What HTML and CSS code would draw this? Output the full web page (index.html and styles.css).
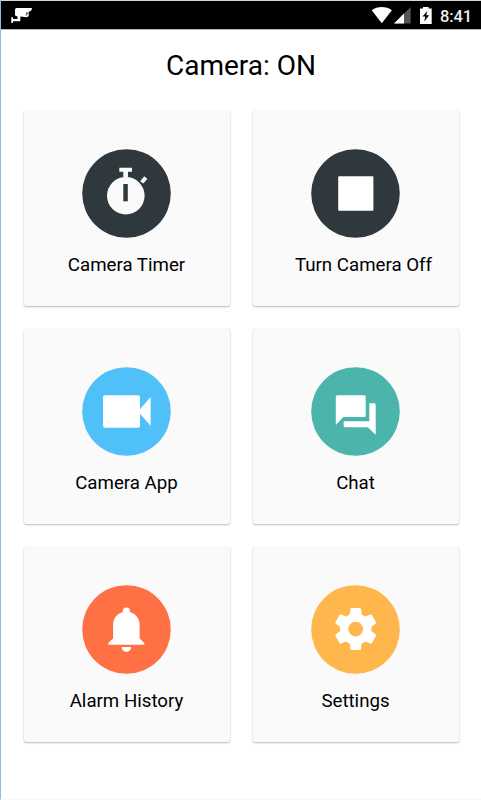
FILE: index.html
```html
<!DOCTYPE html>
<html lang="en">
<head>
<meta charset="utf-8">
<title>Camera</title>
<link rel="stylesheet" href="styles.css">
</head>
<body>
<div class="screen">
  <header class="status">
    <svg class="cctv" width="22" height="16" viewBox="0 0 22 16" fill="#fff">
      <path d="M4 1.2 5 0H21L20.5 2.3 17.7 4V8L16 9.3 9.3 8.5V13.2H2V15H.3V9.3H2V11H6.5V8.6L4 7.5Z"/>
      <path d="M15 4.2h2.5v2H16v1.4h-1.5Z" fill="#777"/>
    </svg>
    <svg class="wifi" width="22" height="17" viewBox="0 0 22 17" fill="#fff"><path d="M.7 3.3C6.5-1 15-1 20.9 3.3L10.8 16.3Z"/></svg>
    <svg class="signal" width="17" height="17" viewBox="0 0 17 17"><path d="M0 16.5 16.7 0V16.5Z" fill="#555"/><path d="M0 16.5 10 6.6V16.5Z" fill="#fff"/></svg>
    <svg class="battery" width="12" height="17" viewBox="0 0 12 17"><path d="M3 0H8.6V1.6H11.7V17H0V1.6H3Z" fill="#fff"/><path d="M7.3 4 2.5 9.6H5.3L4.2 14.5 9.2 8.3H6.3Z" fill="#000"/></svg>
    <span class="time">8:41</span>
  </header>
  <h1 class="title">Camera: ON</h1>
  <main class="grid">
    <div class="card">
      <svg class="icon" viewBox="0 0 89 89" fill="#fafafa">
        <circle class="dark" cx="44.5" cy="44.5" r="44.3"/>
        <circle cx="43.8" cy="46.7" r="18.8"/>
        <path d="M37.3 18.7H50V22.7H46V28H41.3V22.7H37.3Z"/>
        <path d="M58.2 32.2 62.2 27.2 65.4 30 61.2 34.6Z"/>
        <path class="dark" d="M41.3 35H45.8V52.3H41.3Z"/>
      </svg>
      <span class="label">Camera Timer</span>
    </div>
    <div class="card">
      <svg class="icon" viewBox="0 0 89 89" fill="#fff">
        <circle class="dark" cx="44.5" cy="44.5" r="44.3"/>
        <rect x="27.2" y="27.2" width="35.2" height="34.6" rx="1"/>
      </svg>
      <span class="label label-off">Turn Camera Off</span>
    </div>
    <div class="card">
      <svg class="icon" viewBox="0 0 89 89" fill="#fff">
        <circle class="blue" cx="44.5" cy="44.5" r="44.3"/>
        <rect x="21" y="28.2" width="37" height="32.5" rx="2"/>
        <path d="M56 44.4 68.6 30V58.8Z"/>
      </svg>
      <span class="label">Camera App</span>
    </div>
    <div class="card">
      <svg class="icon" viewBox="0 0 89 89" fill="#fff">
        <circle class="teal" cx="44.5" cy="44.5" r="44.3"/>
        <path d="M26.3 28.2H53.2a1.5 1.5 0 0 1 1.5 1.5V48.6a1.5 1.5 0 0 1-1.5 1.5H32.4L24.8 58V29.7a1.5 1.5 0 0 1 1.5-1.5Z"/>
        <path d="M58.3 36.2H63.2a1.5 1.5 0 0 1 1.5 1.5V67.7L56.8 60.2H34.2a1.5 1.5 0 0 1-1.5-1.5V54.2H58.3Z"/>
      </svg>
      <span class="label">Chat</span>
    </div>
    <div class="card">
      <svg class="icon" viewBox="0 0 89 89" fill="#fff">
        <circle class="orange" cx="44.5" cy="44.5" r="44.3"/>
        <path d="M40.8 27V26a3.6 3.6 0 0 1 7.2 0V27C54.5 29 57.6 34 57.6 40V53.5L62.3 58V59.8H26.3V58L31.1 53.5V40C31.1 34 34.3 29 40.8 27Z"/>
        <path d="M39.7 62H49.1C49.1 68.3 39.7 68.3 39.7 62Z"/>
      </svg>
      <span class="label">Alarm History</span>
    </div>
    <div class="card">
      <svg class="icon" viewBox="0 0 89 89" fill="#fff">
        <circle class="amber" cx="44.5" cy="44.5" r="44.3"/>
        <path transform="translate(19.5 18.8) scale(2.1)" d="M19.43 12.98c.04-.32.07-.64.07-.98s-.03-.66-.07-.98l2.11-1.65c.19-.15.24-.42.12-.64l-2-3.46c-.12-.22-.39-.3-.61-.22l-2.49 1c-.52-.4-1.08-.73-1.69-.98l-.38-2.65C14.46 2.18 14.25 2 14 2h-4c-.25 0-.46.18-.49.42l-.38 2.65c-.61.25-1.17.59-1.69.98l-2.49-1c-.23-.09-.49 0-.61.22l-2 3.46c-.13.22-.07.49.12.64l2.11 1.65c-.04.32-.07.65-.07.98s.03.66.07.98l-2.11 1.65c-.19.15-.24.42-.12.64l2 3.46c.12.22.39.3.61.22l2.49-1c.52.4 1.08.73 1.69.98l.38 2.65c.03.24.24.42.49.42h4c.25 0 .46-.18.49-.42l.38-2.65c.61-.25 1.17-.59 1.69-.98l2.49 1c.23.09.49 0 .61-.22l2-3.46c.12-.22.07-.49-.12-.64l-2.11-1.65zM12 15.5c-1.93 0-3.5-1.57-3.5-3.5s1.57-3.5 3.5-3.5 3.5 1.57 3.5 3.5-1.57 3.5-3.5 3.5z"/>
      </svg>
      <span class="label">Settings</span>
    </div>
  </main>
</div>
</body>
</html>
```
FILE: styles.css
```css
* { box-sizing: border-box; }
body { margin: 0; background: #fff; font-family: Roboto, sans-serif; color: #000; }
.screen { height: 800px; border-left: 1px solid #98b6e6; border-bottom: 1px solid #f7f7f7; overflow: hidden; }
.status {
  height: 30px; display: flex; align-items: flex-start; background: #000;
  border-top: 1px solid #d4d8d8; border-bottom: 1px solid #b8b8b8;
  margin-left: -1px; border-left: 1px solid #1473c4; padding: 6px 9px 0 10px;
}
.cctv { margin-top: 1px; }
.wifi { margin-left: auto; }
.signal { margin-left: 1px; }
.battery { margin-left: 9px; }
.time { margin-left: 8px; color: #eee; font-size: 16.5px; line-height: 19px; width: 32px; font-weight: 500; letter-spacing: -.1px; white-space: nowrap; }
.title { margin: 0; height: 80px; padding-top: 18px; font-size: 28px; line-height: 36px; font-weight: 400; text-align: center; }
.grid { display: grid; grid-template-columns: 206px 206px; grid-auto-rows: 195px; gap: 23px; padding: 1px 0 0 22.5px; }
.card {
  background: #fafafa; border-radius: 2px; padding-top: 38px;
  display: flex; flex-direction: column; align-items: center;
  box-shadow: 0 1px 2px rgba(0,0,0,.26), 0 0 1px rgba(0,0,0,.14);
}
.icon { width: 89px; height: 89px; display: block; flex: none; }
.label { margin-top: 15px; font-size: 18.7px; line-height: 24px; white-space: nowrap; }
.label-off { margin-left: 16px; }
.dark { fill: #2f383d; }
.blue { fill: #4fc1f8; }
.teal { fill: #4cb5ab; }
.orange { fill: #ff7144; }
.amber { fill: #ffb64d; }
```
